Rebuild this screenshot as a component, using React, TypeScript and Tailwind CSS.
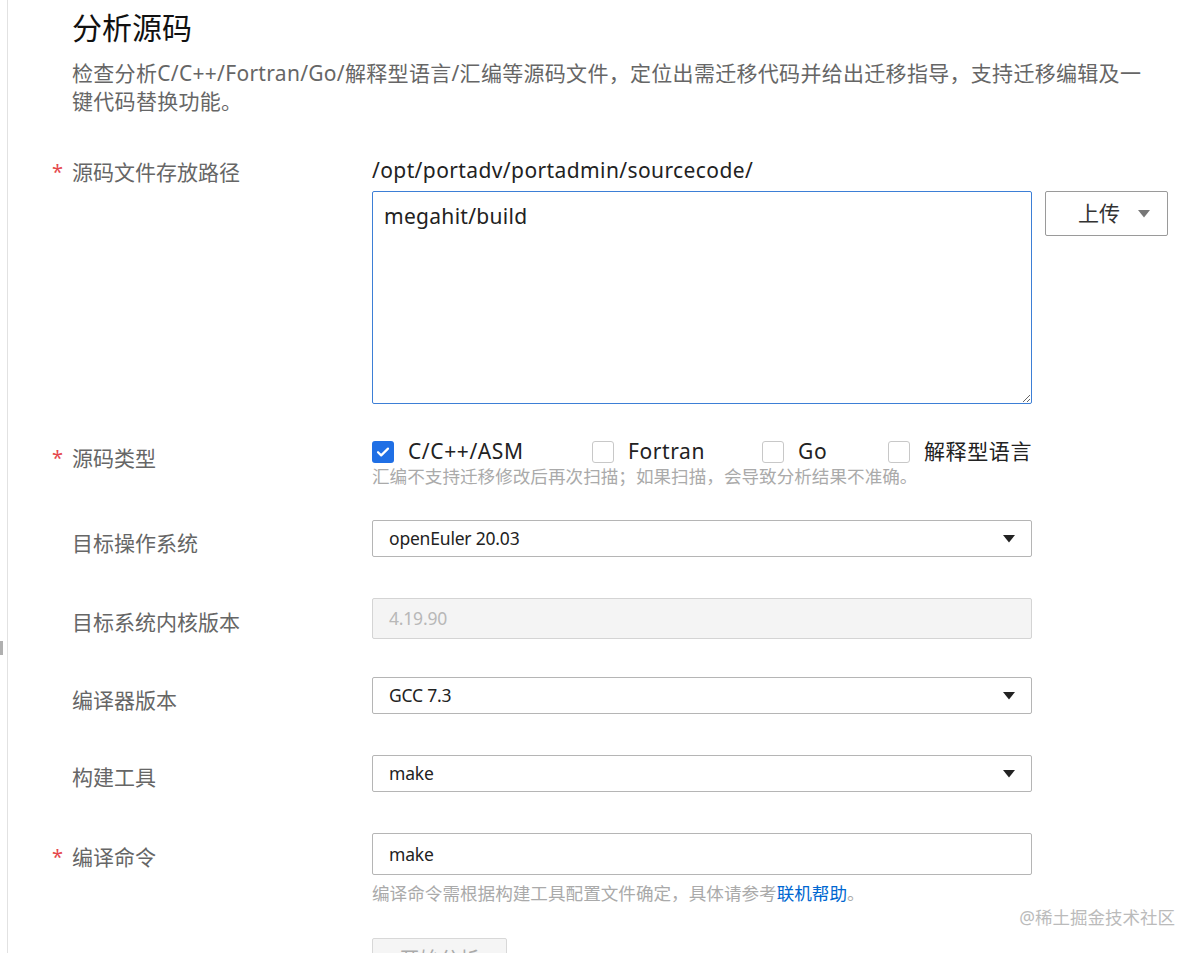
const FONT = "font-['Noto_Sans','Noto_Sans_CJK_SC',sans-serif]";

function Caret({ className }: { className: string }) {
  return (
    <svg viewBox="0 0 12 8" className={className}>
      <path d="M0 0h12L6 7.5z" fill="currentColor" />
    </svg>
  );
}

function Label({ text, required, pt }: { text: string; required?: boolean; pt: string }) {
  return (
    <div className={`w-[320px] shrink-0 flex items-start ${pt}`}>
      <span className="w-[20px] text-[20px] leading-[28px] text-[#e5484d]">{required ? "*" : ""}</span>
      <span className="text-[21px] leading-[28px] text-[#666]">{text}</span>
    </div>
  );
}

function Select({ value }: { value: string }) {
  return (
    <div className="w-[660px] h-[37px] flex items-center justify-between px-[16px] border border-[#b5b5b5] rounded-[2px] bg-white">
      <span className="text-[17.5px] text-[#222] tracking-[-0.2px]">{value}</span>
      <Caret className="w-[12px] h-[8px] text-[#222]" />
    </div>
  );
}

function Checkbox({ label, checked, w }: { label: string; checked?: boolean; w: string }) {
  return (
    <div className={`flex items-center gap-[14px] ${w}`}>
      {checked ? (
        <span className="w-[22px] h-[22px] rounded-[3px] bg-[#1f6fe5] flex items-center justify-center">
          <svg viewBox="0 0 16 16" className="w-[16px] h-[16px]">
            <path d="M3 8.2l3.2 3.2L13 4.6" fill="none" stroke="white" strokeWidth="2.2" strokeLinecap="round" strokeLinejoin="round" />
          </svg>
        </span>
      ) : (
        <span className="w-[22px] h-[22px] rounded-[3px] border border-[#c8c8c8] bg-white" />
      )}
      <span className="text-[21px] leading-[27px] text-[#222] tracking-[0.6px] whitespace-nowrap">{label}</span>
    </div>
  );
}

export default function App() {
  return (
    <div className={`w-[1202px] h-[953px] overflow-hidden bg-white flex ${FONT}`}>
      {/* left rail */}
      <div className="w-[8px] shrink-0 border-r border-[#e2e2e2] flex flex-col">
        <div className="h-[641px]" />
        <div className="w-[3px] h-[14px] bg-[#b0b0b0]" />
      </div>

      <div className="flex-1 pl-[44px]">
        {/* header */}
        <div className="pl-[20px] pt-[10px]">
          <h1 className="text-[30px] leading-[36px] text-[#111]">分析源码</h1>
          <p className="mt-[13px] text-[21px] leading-[28px] text-[#666] tracking-[0.3px] whitespace-nowrap">
            检查分析C/C++/Fortran/Go/解释型语言/汇编等源码文件，定位出需迁移代码并给出迁移指导，支持迁移编辑及一
            <br />
            键代码替换功能。
          </p>
        </div>

        {/* source path */}
        <div className="flex mt-[41px]">
          <Label text="源码文件存放路径" required pt="pt-[2px]" />
          <div>
            <div className="text-[21px] leading-[28px] text-[#222] tracking-[0.4px]">/opt/portadv/portadmin/sourcecode/</div>
            <div className="flex items-start gap-[13px] mt-[7px]">
              <textarea
                defaultValue="megahit/build"
                className="w-[660px] h-[213px] border border-[#3d7fd6] rounded-[2px] px-[11px] py-[10px] text-[21px] leading-[28px] text-[#222] tracking-[0.3px] outline-none resize"
              />
              <div className="w-[123px] h-[45px] border border-[#9a9a9a] rounded-[2px] flex items-center pl-[32px] gap-[18px]">
                <span className="text-[21px] text-[#333]">上传</span>
                <Caret className="w-[12px] h-[8px] text-[#777]" />
              </div>
            </div>
          </div>
        </div>

        {/* source type */}
        <div className="flex mt-[34px]">
          <Label text="源码类型" required pt="pt-[6px]" />
          <div>
            <div className="h-[27px] flex items-center">
              <Checkbox label="C/C++/ASM" checked w="w-[220px]" />
              <Checkbox label="Fortran" w="w-[170px]" />
              <Checkbox label="Go" w="w-[126px]" />
              <Checkbox label="解释型语言" w="w-[160px]" />
            </div>
            <div className="text-[17.6px] leading-[22px] text-[#aaa]">汇编不支持迁移修改后再次扫描；如果扫描，会导致分析结果不准确。</div>
          </div>
        </div>

        {/* target os */}
        <div className="flex mt-[33px]">
          <Label text="目标操作系统" pt="pt-[9px]" />
          <Select value="openEuler 20.03" />
        </div>

        {/* kernel version */}
        <div className="flex mt-[41px]">
          <Label text="目标系统内核版本" pt="pt-[10px]" />
          <div className="w-[660px] h-[41px] flex items-center px-[16px] border border-[#d4d4d4] rounded-[2px] bg-[#f4f4f4]">
            <span className="text-[17.5px] text-[#b8b8b8] tracking-[-0.2px]">4.19.90</span>
          </div>
        </div>

        {/* compiler */}
        <div className="flex mt-[38px]">
          <Label text="编译器版本" pt="pt-[9px]" />
          <Select value="GCC 7.3" />
        </div>

        {/* build tool */}
        <div className="flex mt-[41px]">
          <Label text="构建工具" pt="pt-[8px]" />
          <Select value="make" />
        </div>

        {/* compile command */}
        <div className="flex mt-[41px]">
          <Label text="编译命令" required pt="pt-[10px]" />
          <div>
            <div className="w-[660px] h-[42px] flex items-center px-[16px] border border-[#b5b5b5] rounded-[2px] bg-white">
              <span className="text-[17.5px] text-[#222] tracking-[-0.2px]">make</span>
            </div>
            <div className="mt-[7px] text-[17.6px] leading-[22px] text-[#aaa]">
              编译命令需根据构建工具配置文件确定，具体请参考<span className="text-[#0067d1]">联机帮助</span>。
            </div>
          </div>
        </div>

        <div className="flex justify-end pr-[27px] mt-[2px] text-[17.5px] leading-[22px] text-[#bbb]">@稀土掘金技术社区</div>

        <div className="pl-[320px] mt-[10px]">
          <div className="w-[135px] h-[44px] border border-[#d8d8d8] rounded-[2px] bg-[#f5f5f5] flex items-center justify-center">
            <span className="text-[20px] text-[#aaa]">开始分析</span>
          </div>
        </div>
      </div>
    </div>
  );
}
